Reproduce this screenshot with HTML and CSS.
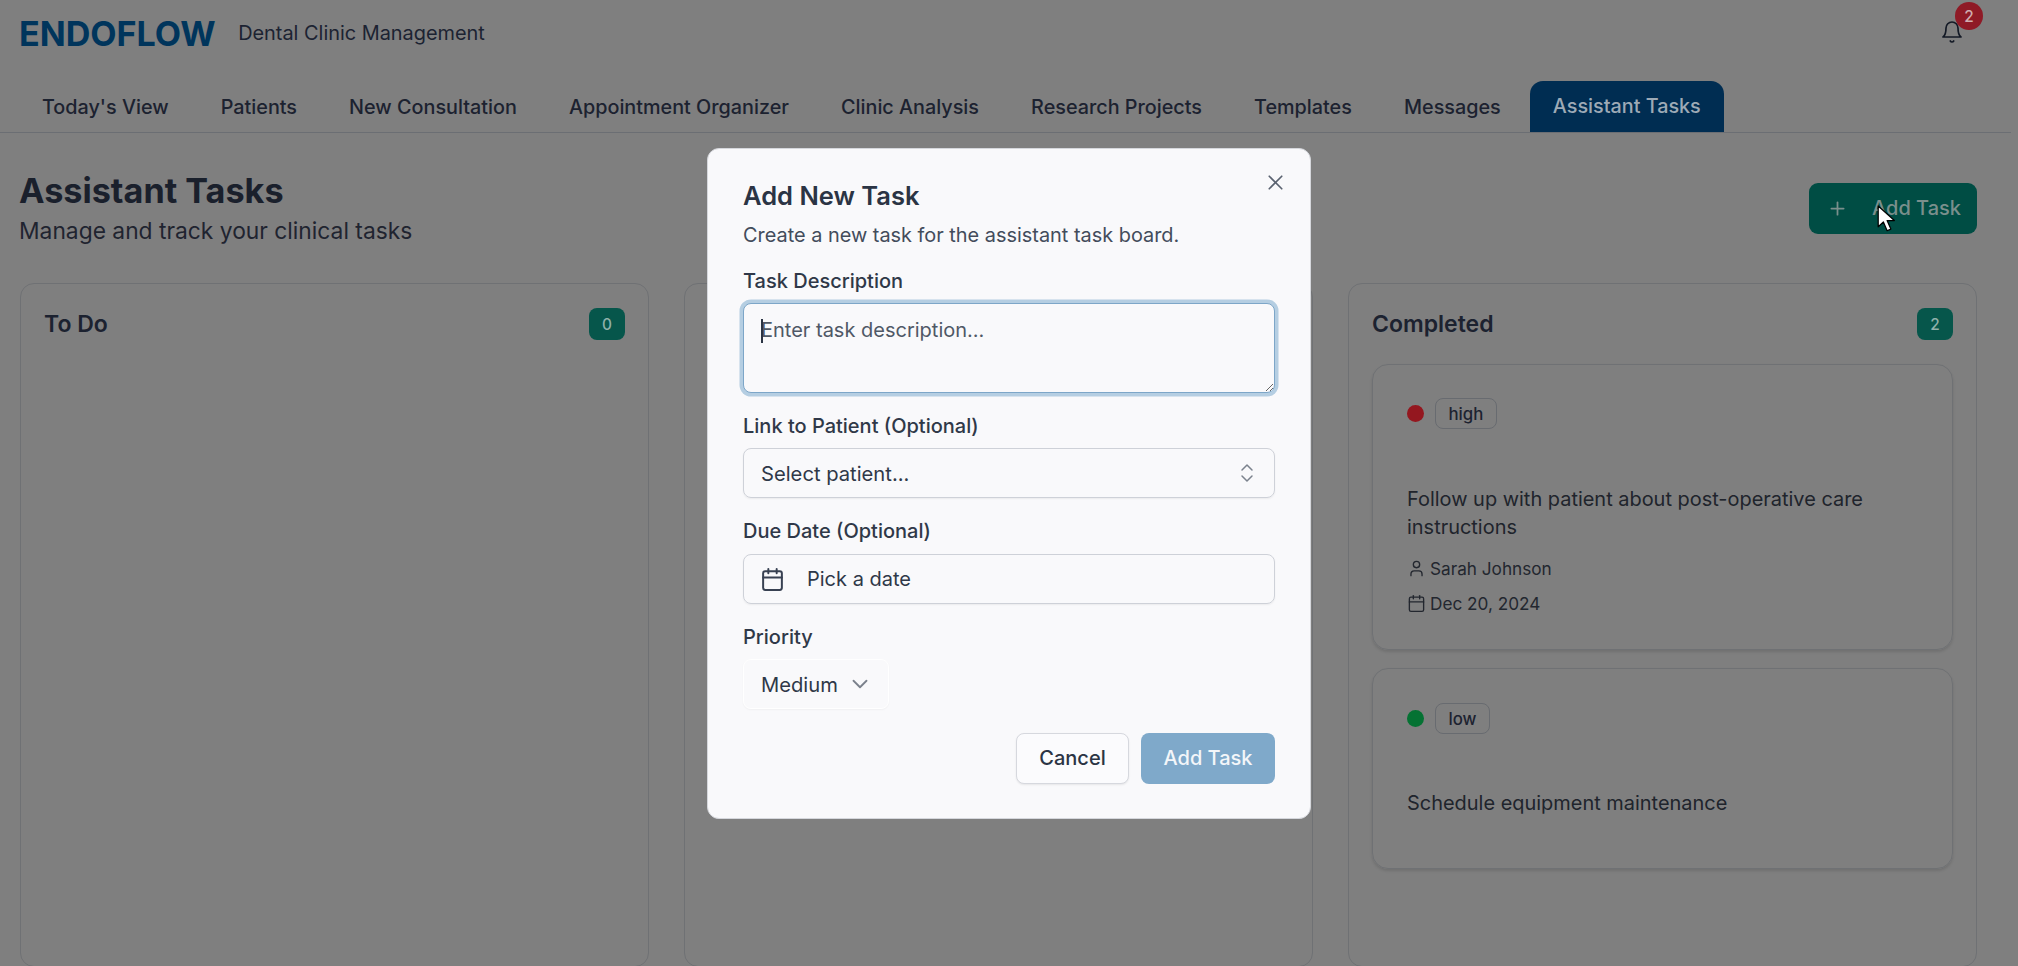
FILE: index.html
```html
<!DOCTYPE html>
<html lang="en">
<head>
<meta charset="utf-8">
<title>ENDOFLOW - Assistant Tasks</title>
<link rel="stylesheet" href="styles.css">
</head>
<body>
<div class="page">
  <header class="topbar">
    <div class="brand">
      <span class="logo">ENDOFLOW</span>
      <span class="tagline">Dental Clinic Management</span>
    </div>
    <div class="bell">
      <svg class="bell-icon" viewBox="0 0 24 24"><path d="M6 8a6 6 0 0 1 12 0c0 7 3 9 3 9H3s3-2 3-9"/><path d="M10.3 21a1.94 1.94 0 0 0 3.4 0"/></svg>
      <span class="bell-count">2</span>
    </div>
  </header>
  <nav class="tabs">
    <a class="tab">Today's View</a>
    <a class="tab">Patients</a>
    <a class="tab">New Consultation</a>
    <a class="tab">Appointment Organizer</a>
    <a class="tab">Clinic Analysis</a>
    <a class="tab">Research Projects</a>
    <a class="tab">Templates</a>
    <a class="tab">Messages</a>
    <a class="tab tab-active">Assistant Tasks</a>
  </nav>
  <main class="content">
    <div class="page-head">
      <div class="page-heading">
        <h1 class="page-title">Assistant Tasks</h1>
        <p class="page-sub">Manage and track your clinical tasks</p>
      </div>
      <button class="add-btn">
        <svg class="add-icon" viewBox="0 0 24 24"><path d="M5 12h14"/><path d="M12 5v14"/></svg>
        <span class="add-label">Add Task</span>
      </button>
    </div>
    <div class="board">
      <section class="column">
        <div class="col-head"><h2 class="col-title">To Do</h2><span class="count">0</span></div>
      </section>
      <section class="column">
        <div class="col-head"><h2 class="col-title">In Progress</h2><span class="count">0</span></div>
      </section>
      <section class="column">
        <div class="col-head"><h2 class="col-title">Completed</h2><span class="count">2</span></div>
        <article class="card">
          <div class="card-tags"><span class="dot dot-high"></span><span class="tag">high</span></div>
          <p class="card-text">Follow up with patient about post-operative care instructions</p>
          <div class="card-meta">
            <svg class="meta-icon" viewBox="0 0 24 24"><path d="M19 21v-2a4 4 0 0 0-4-4H9a4 4 0 0 0-4 4v2"/><circle cx="12" cy="7" r="4"/></svg>
            <span>Sarah Johnson</span>
          </div>
          <div class="card-meta">
            <svg class="meta-icon" viewBox="0 0 24 24"><path d="M8 2v4"/><path d="M16 2v4"/><rect x="3" y="4" width="18" height="18" rx="2"/><path d="M3 10h18"/></svg>
            <span>Dec 20, 2024</span>
          </div>
        </article>
        <article class="card card-short">
          <div class="card-tags"><span class="dot dot-low"></span><span class="tag">low</span></div>
          <p class="card-text">Schedule equipment maintenance</p>
        </article>
      </section>
    </div>
  </main>
</div>

<svg class="cursor" viewBox="0 0 18 27"><path d="M1 1v20l5-4.6 3.6 8.4 3.6-1.6-3.6-8.2h7z"/></svg>

<div class="modal" role="dialog" aria-labelledby="modal-title">
  <button class="modal-close" aria-label="Close">
    <svg viewBox="0 0 24 24"><path d="M18 6 6 18"/><path d="m6 6 12 12"/></svg>
  </button>
  <h2 class="modal-title" id="modal-title">Add New Task</h2>
  <p class="modal-sub">Create a new task for the assistant task board.</p>
  <label class="field-label field-first">Task Description</label>
  <div class="area-wrap">
    <textarea class="area" placeholder="Enter task description..."></textarea>
    <span class="caret"></span>
  </div>
  <label class="field-label">Link to Patient (Optional)</label>
  <div class="control control-between">
    <span>Select patient...</span>
    <svg class="updown" viewBox="0 0 24 24"><path d="m7 15 5 5 5-5"/><path d="m7 9 5-5 5 5"/></svg>
  </div>
  <label class="field-label">Due Date (Optional)</label>
  <div class="control control-date">
    <svg class="cal" viewBox="0 0 24 24"><path d="M8 2v4"/><path d="M16 2v4"/><rect x="3" y="4" width="18" height="18" rx="2"/><path d="M3 10h18"/></svg>
    <span>Pick a date</span>
  </div>
  <label class="field-label">Priority</label>
  <div class="priority">
    <span>Medium</span>
    <svg class="chev" viewBox="0 0 24 24"><path d="m6 9 6 6 6-6"/></svg>
  </div>
  <div class="modal-actions">
    <button class="btn btn-cancel">Cancel</button>
    <button class="btn btn-add">Add Task</button>
  </div>
</div>
</body>
</html>
```
FILE: styles.css
```css
* { box-sizing: border-box; }
html, body { margin: 0; height: 100%; overflow: hidden; }
body {
  background: #7f7f7f;
  color: #1c2230;
  font-family: Inter, "Liberation Sans", sans-serif;
}
button { font-family: inherit; cursor: pointer; }
h1, h2, p { margin: 0; }
svg { fill: none; stroke: currentColor; stroke-width: 2; stroke-linecap: round; stroke-linejoin: round; flex: none; }

.page { width: 2011px; height: 966px; overflow: hidden; }

.topbar { display: flex; justify-content: space-between; align-items: center; height: 66px; padding: 0 39px 0 19px; }
.brand { display: flex; align-items: center; gap: 22.5px; }
.logo { font-size: 34.1px; font-weight: 700; color: #00355c; }
.tagline { font-size: 19.9px; color: #1c2332; }

.bell { position: relative; width: 28px; height: 28px; display: flex; align-items: center; justify-content: center; margin-top: -2px; margin-right: 6px; }
.bell-icon { width: 24px; height: 24px; color: #141a26; stroke-width: 1.7; }
.bell-count { position: absolute; top: -16px; right: -17px; width: 28px; height: 28px; border-radius: 50%; background: #8f1a26; color: #d0adb0; font-size: 15.4px; font-weight: 500; display: flex; align-items: center; justify-content: center; }

.tabs { display: flex; gap: 6.1px; padding: 15px 0 0 19px; height: 67px; border-bottom: 1.5px solid #6b6e73; }
.tab { display: flex; align-items: center; padding: 0 23px; font-size: 19.8px; font-weight: 500; color: #1c2230; border-radius: 13px 13px 0 0; }
.tab-active { background: #002d52; color: #9daab6; padding-bottom: 2px; }

.content { padding: 0 34px 0 20px; }
.page-head { display: flex; justify-content: space-between; align-items: center; height: 150px; }
.page-heading { margin-left: -1px; }
.page-title { font-size: 34.2px; font-weight: 700; line-height: 44px; color: #1a202c; }
.page-sub { margin-top: 2px; font-size: 22.8px; line-height: 32px; color: #1f2430; }
.add-btn { display: flex; align-items: center; gap: 24px; height: 51px; width: 168px; padding: 0 18px; border: 0; border-radius: 9px; background: #004d44; color: #7a8f8c; font-size: 20px; font-weight: 500; }
.add-icon { width: 21px; height: 21px; }
.add-label { white-space: nowrap; }

.board { display: grid; grid-template-columns: repeat(3, 629px); gap: 35px; }
.column { height: 684px; padding: 24px 23px; border: 1.5px solid #6f7174; border-radius: 14px; }
.col-head { display: flex; justify-content: space-between; align-items: center; height: 32px; margin-bottom: 24px; }
.col-title { font-size: 23px; font-weight: 600; color: #1c2230; }
.count { display: flex; align-items: center; justify-content: center; width: 36px; height: 32px; border-radius: 8px; background: #06564b; color: #8fb0aa; font-size: 15.4px; font-weight: 500; }

.card { padding: 33px 34px; height: 286px; margin-bottom: 18px; border: 1.5px solid #6f7174; border-radius: 16px; box-shadow: 0 2px 3px rgba(0, 0, 0, .12); }
.card-short { height: 201px; padding-top: 34px; }
.card-tags { display: flex; align-items: center; gap: 11px; height: 31px; margin-bottom: 55.6px; }
.card-short .card-tags { margin-bottom: 54.6px; }
.dot { width: 17px; height: 17px; border-radius: 50%; }
.dot-high { background: #94171f; }
.dot-low { background: #057233; }
.tag { display: flex; align-items: center; height: 31px; padding: 0 12.5px; border: 1.5px solid #686b70; border-radius: 8px; font-size: 16.8px; font-weight: 450; color: #1c2230; }
.card-text { font-size: 19.95px; line-height: 28.5px; color: #20242c; }
.card-meta { display: flex; align-items: center; gap: 4px; margin-top: 15px; font-size: 17.2px; line-height: 19px; color: #23272f; }
.card-text + .card-meta { margin-top: 17px; }
.card-text + .card-meta + .card-meta { margin-top: 16px; }
.meta-icon { width: 19px; height: 19px; stroke-width: 1.7; }

.cursor { position: absolute; left: 1877px; top: 205px; width: 19px; height: 28px; fill: #fff; stroke: #000; stroke-width: 1.2; z-index: 3; }

.modal { position: absolute; left: 707px; top: 148px; width: 604px; height: 671px; padding: 22px 35px 0 35px; background: #f9f9fb; border: 1px solid #d5d7dc; border-radius: 12px; color: #2b3444; z-index: 2; }
.modal-close { position: absolute; top: 21px; right: 22px; width: 25px; height: 25px; padding: 0; background: none; border: 0; color: #5a6270; }
.modal-close svg { display: block; width: 25px; height: 25px; stroke-width: 1.6; }
.modal-title { font-size: 25.5px; line-height: 50.5px; font-weight: 600; color: #2b3444; }
.modal-sub { font-size: 19.9px; line-height: 26px; color: #434c5b; }
.field-label { display: block; margin-top: 21px; font-size: 20px; line-height: 24px; font-weight: 450; color: #2f3848; }
.field-first { margin-top: 21.5px; }

.area-wrap { position: relative; margin-top: 10px; height: 90px; }
.area { display: block; width: 100%; height: 90px; padding: 14px 17px; background: #f9f9fb; border: 1.5px solid #7da6c8; border-radius: 8px; box-shadow: 0 0 0 3.5px #b5cee2; outline: 0; font-family: inherit; font-size: 20px; line-height: 24px; color: #2b3444; }
.area::placeholder { color: #4f5866; opacity: 1; }
.caret { position: absolute; left: 18px; top: 16px; width: 1.5px; height: 24px; background: #2b3444; }

.control { display: flex; align-items: center; height: 50px; margin-top: 10px; border: 1.5px solid #ced1d8; border-radius: 8px; font-size: 20px; color: #2f3848; box-shadow: 0 1px 2px rgba(0, 0, 0, .06); }
.control-between { justify-content: space-between; padding: 0 15px 0 17px; font-size: 20.2px; font-weight: 400; }
.control-date { gap: 22px; margin-top: 11px; padding: 0 16px; font-weight: 400; }
.updown { width: 24px; height: 24px; color: #7b828d; stroke-width: 1.5; }
.cal { width: 25px; height: 25px; stroke-width: 1.9; color: #384152; }

.priority { display: flex; align-items: center; gap: 9px; width: 146px; height: 50px; margin-top: 10px; padding: 0 17px; border: 1.5px solid #fff; border-radius: 8px; font-size: 20.2px; font-weight: 400; color: #2f3848; box-shadow: 0 1px 2px rgba(0, 0, 0, .04); }
.chev { width: 26px; height: 26px; color: #7b818c; stroke-width: 1.7; }

.modal-actions { display: flex; justify-content: flex-end; gap: 12px; margin-top: 23.5px; }
.btn { height: 51px; border-radius: 8px; font-size: 20px; font-weight: 450; }
.btn-cancel { width: 113px; background: #fbfbfd; border: 1.5px solid #d6d8de; color: #2b3444; box-shadow: 0 1px 2px rgba(0, 0, 0, .08); }
.btn-add { width: 134px; background: #7fa9ca; border: 0; color: #f3f6f9; }
```
